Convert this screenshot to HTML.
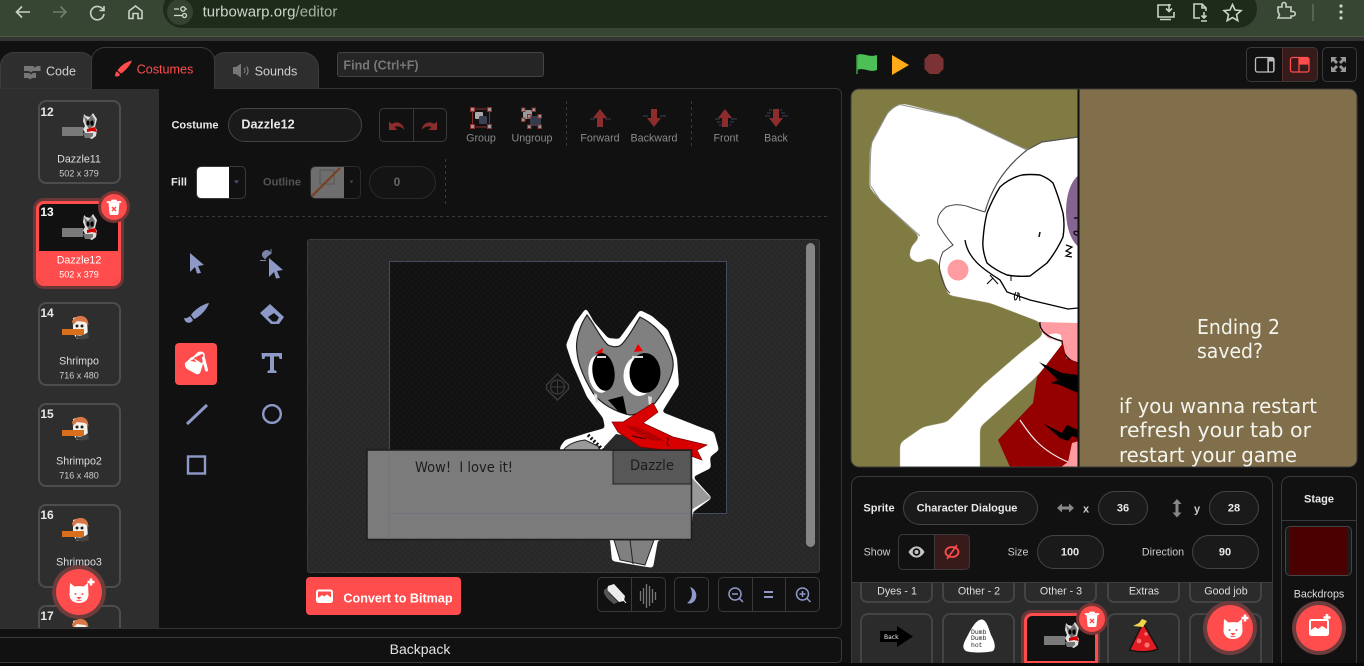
<!DOCTYPE html>
<html><head><meta charset="utf-8"><style>
html,body{margin:0;padding:0;width:1364px;height:666px;overflow:hidden;background:#0e0e0e;font-family:"Liberation Sans",sans-serif}
div{box-sizing:border-box}
.a{position:absolute}
.t{position:absolute;white-space:nowrap;transform:translate(-50%,-50%);line-height:1}
.t[style*="font-size:11px"],.t[style*="font-size:9px"],.lb{margin-top:1px}
.t[style*="font-size:11px"]:not([style*="bold"]){font-size:10.7px!important}
.tile{position:absolute;left:38px;width:83px;border:2px solid #4d4d4d;border-radius:8px}
.lb{color:#8a8a8a;font-size:10.7px}
.in{position:absolute;border:1px solid #444;border-radius:17px;background:#1a1a1a;height:34px}
.grp{position:absolute;border:1px solid #3a3a3a;border-radius:5px}
.sp{position:absolute;top:583px;width:73px;height:20px;border:2px solid #444;border-top:0;border-radius:0 0 7px 7px}
.st{position:absolute;top:613px;width:73px;height:60px;border:2px solid #444;border-radius:8px}
</style></head><body>

<!-- browser chrome -->
<div class="a" style="left:0;top:0;width:1364px;height:36px;background:#374533"></div>
<div class="a" style="left:0;top:36px;width:1364px;height:1px;background:#4c5a47"></div>
<div class="a" style="left:0;top:37px;width:1364px;height:4px;background:#333"></div>
<div class="a" style="left:163px;top:-10px;width:1094px;height:38px;background:#1e2b1b;border-radius:19px"></div>
<div class="a" style="left:167px;top:-1px;width:26px;height:26px;background:#34422f;border-radius:50%"></div>
<div class="t" style="left:270px;top:12px;font-size:15px;letter-spacing:.03px;color:#cdd5c8">turbowarp.org<span style="color:#a9b3a4">/editor</span></div>

<!-- page -->
<div class="a" style="left:0;top:41px;width:1364px;height:625px;background:#111"></div>

<!-- tabs -->
<div class="a" style="left:0;top:52px;width:95px;height:37px;background:#2e2e2e;border:1px solid #3d3d3d;border-bottom:0;border-radius:14px 14px 0 0"></div>
<div class="a" style="left:211px;top:52px;width:108px;height:37px;background:#2e2e2e;border:1px solid #3d3d3d;border-bottom:0;border-radius:14px 16px 0 0"></div>
<div class="a" style="left:91px;top:47px;width:124px;height:42px;background:#111;border:1px solid #3a3a3a;border-bottom:0;border-radius:14px 14px 0 0;z-index:2"></div>
<div class="t" style="left:61px;top:72px;font-size:12.6px;color:#cfcfcf">Code</div>
<div class="t" style="left:165px;top:70px;font-size:12.6px;color:#ff4d4d;z-index:3">Costumes</div>
<div class="t" style="left:276px;top:72px;font-size:12.6px;color:#cfcfcf">Sounds</div>
<div class="a" style="left:337px;top:52px;width:207px;height:25px;background:#252525;border:1px solid #444;border-radius:3px"></div>
<div class="t" style="left:381px;top:66px;font-size:12.6px;font-weight:bold;color:#777">Find (Ctrl+F)</div>

<!-- left panel -->
<div class="a" style="left:0;top:88px;width:842px;height:541px;background:#111;border:1px solid #333;border-radius:0 6px 6px 0;"></div>
<div class="a" style="left:0;top:89px;width:159px;height:539px;background:#2e2e2e;overflow:hidden">
</div>

<div class="tile" style="top:100px;height:84px"></div>
<div class="tile" style="top:302px;height:84px"></div>
<div class="tile" style="top:403px;height:84px"></div>
<div class="tile" style="top:504px;height:84px"></div>
<div class="tile" style="top:605px;height:23px;border-bottom:0;border-radius:8px 8px 0 0"></div>
<div class="a" style="left:33px;top:198px;width:91px;height:91px;border-radius:11px;background:#6b3737"></div>
<div class="a" style="left:36px;top:201px;width:85px;height:85px;border:3px solid #ff4c4c;border-radius:8px;background:#111;overflow:hidden"><div class="a" style="left:0;top:47px;width:85px;height:40px;background:#ff4c4c"></div></div>

<div class="t" style="left:47px;top:112px;font-size:12px;font-weight:bold;color:#e8e8e8">12</div>
<div class="t" style="left:47px;top:212px;font-size:12px;font-weight:bold;color:#fff">13</div>
<div class="t" style="left:47px;top:313px;font-size:12px;font-weight:bold;color:#e8e8e8">14</div>
<div class="t" style="left:47px;top:414px;font-size:12px;font-weight:bold;color:#e8e8e8">15</div>
<div class="t" style="left:47px;top:515px;font-size:12px;font-weight:bold;color:#e8e8e8">16</div>
<div class="t" style="left:47px;top:616px;font-size:12px;font-weight:bold;color:#e8e8e8">17</div>

<div class="t" style="left:79px;top:159px;font-size:11px;color:#ddd">Dazzle11</div>
<div class="t" style="left:79px;top:173px;font-size:9px;color:#ccc">502 x 379</div>
<div class="t" style="left:79px;top:260px;font-size:11px;color:#fff">Dazzle12</div>
<div class="t" style="left:79px;top:274px;font-size:9px;color:#fff">502 x 379</div>
<div class="t" style="left:79px;top:361px;font-size:11px;color:#ddd">Shrimpo</div>
<div class="t" style="left:79px;top:375px;font-size:9px;color:#ccc">716 x 480</div>
<div class="t" style="left:79px;top:461px;font-size:11px;color:#ddd">Shrimpo2</div>
<div class="t" style="left:79px;top:475px;font-size:9px;color:#ccc">716 x 480</div>
<div class="t" style="left:79px;top:562px;font-size:11px;color:#ddd">Shrimpo3</div>

<!-- top toolbar -->
<div class="t" style="left:195px;top:125px;font-size:11px;font-weight:bold;color:#e8e8e8">Costume</div>
<div class="in" style="left:228px;top:108px;width:134px;background:#1a1a1a"></div>
<div class="t" style="left:268px;top:125px;font-size:12.6px;font-weight:bold;color:#e8e8e8">Dazzle12</div>
<div class="grp" style="left:379px;top:108px;width:68px;height:34px"></div>
<div class="a" style="left:413px;top:108px;width:1px;height:34px;background:#3a3a3a"></div>
<div class="t lb" style="left:481px;top:138px">Group</div>
<div class="t lb" style="left:532px;top:138px">Ungroup</div>
<div class="t lb" style="left:600px;top:138px">Forward</div>
<div class="t lb" style="left:654px;top:138px">Backward</div>
<div class="t lb" style="left:726px;top:138px">Front</div>
<div class="t lb" style="left:776px;top:138px">Back</div>

<div class="t" style="left:179px;top:182px;font-size:11px;font-weight:bold;color:#e8e8e8">Fill</div>
<div class="a" style="left:196px;top:166px;width:50px;height:33px;border:1px solid #3a3a3a;border-radius:5px;overflow:hidden"><div style="width:33px;height:33px;background:#fff;margin:-1px 0 0 -1px"></div></div>
<div class="t" style="left:282px;top:182px;font-size:11px;font-weight:bold;color:#555">Outline</div>
<div class="a" style="left:310px;top:166px;width:51px;height:33px;border:1px solid #2c2c2c;border-radius:5px;overflow:hidden"><div style="width:34px;height:33px;background:#6e6e6e;margin:-1px 0 0 -1px"></div></div>
<div class="a" style="left:369px;top:166px;width:67px;height:33px;border:1px solid #2b2b2b;border-radius:17px;background:#141414"></div>
<div class="t" style="left:397px;top:182px;font-size:12px;font-weight:bold;color:#666">0</div>

<!-- canvas -->
<div class="a" style="left:307px;top:239px;width:513px;height:334px;border:1px solid #3c3c3c;border-radius:3px;background:repeating-conic-gradient(#2b2b2b 0 25%,#272727 0 50%) 0 0/6px 6px"></div>
<div class="a" style="left:389px;top:261px;width:338px;height:253px;border:1px solid #434c5e;background:repeating-conic-gradient(#151515 0 25%,#111 0 50%) 0 0/6px 6px"></div>
<div class="a" style="left:806px;top:243px;width:9px;height:304px;border-radius:5px;background:#858585"></div>

<!-- convert -->
<div class="a" style="left:306px;top:577px;width:155px;height:38px;background:#ff4c4c;border-radius:4px"></div>
<div class="t" style="left:398px;top:599px;font-size:12.6px;font-weight:bold;color:#fff">Convert to Bitmap</div>
<div class="grp" style="left:597px;top:577px;width:69px;height:35px"></div>
<div class="a" style="left:631px;top:577px;width:1px;height:35px;background:#3a3a3a"></div>
<div class="grp" style="left:674px;top:577px;width:35px;height:35px"></div>
<div class="grp" style="left:718px;top:577px;width:102px;height:35px"></div>
<div class="a" style="left:752px;top:577px;width:1px;height:35px;background:#3a3a3a"></div>
<div class="a" style="left:785px;top:577px;width:1px;height:35px;background:#3a3a3a"></div>

<!-- backpack -->
<div class="a" style="left:0;top:637px;width:842px;height:26px;background:#111;border:1px solid #3a3a3a;border-left:0;border-radius:0 5px 5px 0"></div>
<div class="t" style="left:420px;top:649px;font-size:14px;color:#e4e4e4">Backpack</div>
<div class="a" style="left:0;top:663px;width:1364px;height:3px;background:#080808"></div>

<!-- stage controls -->
<div class="a" style="left:1282px;top:47px;width:36px;height:35px;background:#371a1a;border-radius:0 5px 5px 0"></div>
<div class="grp" style="left:1246px;top:47px;width:72px;height:35px"></div>
<div class="a" style="left:1282px;top:47px;width:1px;height:35px;background:#553030"></div>
<div class="grp" style="left:1322px;top:47px;width:35px;height:35px"></div>

<!-- sprite panel -->
<div class="a" style="left:851px;top:476px;width:422px;height:187px;background:#111;border:1px solid #3a3a3a;border-bottom:0;border-radius:9px 9px 0 0;overflow:hidden"></div>
<div class="a" style="left:852px;top:583px;width:420px;height:80px;background:#2b2b2b"></div>
<div class="a" style="left:852px;top:582px;width:420px;height:1px;background:#3d3d3d"></div>
<div class="t" style="left:879px;top:508px;font-size:11px;font-weight:bold;color:#e8e8e8">Sprite</div>
<div class="in" style="left:903px;top:491px;width:135px"></div>
<div class="t" style="left:967px;top:508px;font-size:11px;font-weight:bold;color:#e8e8e8">Character Dialogue</div>
<div class="t" style="left:1086px;top:509px;font-size:11px;font-weight:bold;color:#ccc">x</div>
<div class="in" style="left:1098px;top:491px;width:50px"></div>
<div class="t" style="left:1123px;top:508px;font-size:11px;font-weight:bold;color:#e8e8e8">36</div>
<div class="t" style="left:1197px;top:509px;font-size:11px;font-weight:bold;color:#ccc">y</div>
<div class="in" style="left:1209px;top:491px;width:50px"></div>
<div class="t" style="left:1234px;top:508px;font-size:11px;font-weight:bold;color:#e8e8e8">28</div>
<div class="t" style="left:877px;top:552px;font-size:11px;color:#ccc">Show</div>
<div class="a" style="left:934px;top:534px;width:36px;height:36px;background:#371a1a;border-radius:0 5px 5px 0"></div>
<div class="grp" style="left:898px;top:534px;width:72px;height:36px"></div>
<div class="a" style="left:934px;top:534px;width:1px;height:36px;background:#3a3a3a"></div>
<div class="t" style="left:1018px;top:552px;font-size:11px;color:#ccc">Size</div>
<div class="in" style="left:1037px;top:535px;width:67px"></div>
<div class="t" style="left:1070px;top:552px;font-size:11px;font-weight:bold;color:#e8e8e8">100</div>
<div class="t" style="left:1163px;top:552px;font-size:11px;color:#ccc">Direction</div>
<div class="in" style="left:1192px;top:535px;width:67px"></div>
<div class="t" style="left:1225px;top:552px;font-size:11px;font-weight:bold;color:#e8e8e8">90</div>

<div class="a" style="left:852px;top:583px;width:420px;height:80px;overflow:hidden">
<div class="sp" style="left:8px;top:0"></div><div class="sp" style="left:90px;top:0"></div><div class="sp" style="left:172px;top:0"></div><div class="sp" style="left:255px;top:0"></div><div class="sp" style="left:337px;top:0"></div>
<div class="st" style="left:8px;top:30px"></div><div class="st" style="left:90px;top:30px"></div>
<div class="a" style="left:169px;top:27px;width:79px;height:66px;background:#693838;border-radius:10px"></div>
<div class="a" style="left:172px;top:30px;width:74px;height:60px;background:#111;border:3px solid #ff4c4c;border-radius:8px"></div>
<div class="st" style="left:255px;top:30px"></div><div class="st" style="left:337px;top:30px"></div>
<div class="a" style="left:175px;top:78px;width:68px;height:5px;background:#ff4c4c"></div>
</div>
<div class="t" style="left:897px;top:591px;font-size:11px;color:#ddd">Dyes - 1</div>
<div class="t" style="left:979px;top:591px;font-size:11px;color:#ddd">Other - 2</div>
<div class="t" style="left:1061px;top:591px;font-size:11px;color:#ddd">Other - 3</div>
<div class="t" style="left:1144px;top:591px;font-size:11px;color:#ddd">Extras</div>
<div class="t" style="left:1226px;top:591px;font-size:11px;color:#ddd">Good job</div>

<!-- stage panel -->
<div class="a" style="left:1281px;top:476px;width:76px;height:187px;background:#111;border:1px solid #3a3a3a;border-bottom:0;border-radius:9px 9px 0 0"></div>
<div class="a" style="left:1282px;top:520px;width:74px;height:1px;background:#3a3a3a"></div>
<div class="t" style="left:1319px;top:499px;font-size:11px;font-weight:bold;color:#e8e8e8">Stage</div>
<div class="a" style="left:1285px;top:526px;width:67px;height:50px;border:1px solid #444;border-radius:5px;background:#1a1a1a"></div>
<div class="a" style="left:1290px;top:527px;width:57px;height:48px;background:#4a0000"></div>
<div class="t" style="left:1319px;top:594px;font-size:11px;color:#ddd">Backdrops</div>

<!-- all graphics -->
<svg class="a" style="left:0;top:0;z-index:5" width="1364" height="666" viewBox="0 0 1364 666" xmlns="http://www.w3.org/2000/svg">
<defs>
<filter id="rnd" x="-5%" y="-5%" width="110%" height="110%" color-interpolation-filters="sRGB"><feGaussianBlur stdDeviation="3"/><feComponentTransfer><feFuncA type="linear" slope="8" intercept="-3.500"/></feComponentTransfer></filter>
<filter id="rnd2" x="-5%" y="-5%" width="110%" height="110%" color-interpolation-filters="sRGB"><feGaussianBlur stdDeviation="1.600"/><feComponentTransfer><feFuncA type="linear" slope="7" intercept="-3"/></feComponentTransfer></filter>
<clipPath id="stg"><rect x="851" y="89" width="506" height="378" rx="8"/></clipPath>
<clipPath id="stl"><rect x="851" y="89" width="227" height="378"/></clipPath>
<clipPath id="cv"><rect x="308" y="240" width="511" height="332"/></clipPath>
<clipPath id="tb17"><rect x="0" y="600" width="158" height="27"/></clipPath>
<clipPath id="spr"><rect x="852" y="583" width="420" height="80"/></clipPath>
<g id="dz">
<rect x="0" y="14" width="21" height="9" fill="#7a7a7a"/>
<path d="M21 16l4 8 5 2 4-3 1-6-2-3 2-8-4-6-3 4-4-1-2-2-1 7 2 5z" fill="#ddd"/>
<path d="M22 3 L26 7 L30 2 L33 7 L32 13 L27 16 L24 11Z" fill="#6f6f6f"/>
<ellipse cx="26" cy="10" rx="1.500" ry="2.500" fill="#000"/><ellipse cx="30" cy="10" rx="1.700" ry="2.600" fill="#000"/>
<path d="M25 16 L33 14 L35 19 L30 18 L25 19Z" fill="#d40000"/>
<path d="M21 20h10v3l-3 2h-5z" fill="#777"/>
</g>
<g id="sh">
<path d="M11 2 Q18 -1 25 4 L26 20 L15 23 L11 17Z" fill="#f4f0ea"/>
<path d="M10 5 Q14 -1 20 0 Q26 1 26.500 9 L23 6 L15 5 L11 9Z" fill="#d97746"/>
<circle cx="15" cy="10" r="1.500" fill="#222"/><circle cx="20" cy="10" r="1.500" fill="#222"/>
<path d="M14 19 Q20 21 26 16 L27 22 Q20 25 14 22Z" fill="#444"/>
<path d="M17 14h5v4h-5z" fill="#2a8f8f"/>
<rect x="0" y="13" width="22" height="6" fill="#d96f1c"/>
</g>
<g id="cat">
<path d="M-9 -10 L-4.500 -6.500 C-2 -7 2 -7 4.500 -6.500 L9 -10 L9.500 2 C9 7.500 5 10 0 10 C-5 10 -9 7.500 -9.500 2Z" fill="#fff"/>
<circle cx="-3.500" cy="1" r="1" fill="#ff4c4c"/><circle cx="3.500" cy="1" r="1" fill="#ff4c4c"/>
<path d="M-1.500 4.500H1.500L0 6Z M-2.500 7 Q0 8.500 2.500 7" fill="none" stroke="#ff4c4c" stroke-width="1"/>
<path d="M12 -14.500v7M8.500 -11h7" stroke="#fff" stroke-width="2.600"/>
</g>
<g id="trash">
<path d="M-5.500 -4 h11 l-1 10.500 q-.2 1.500 -1.600 1.500 h-5.800 q-1.400 0 -1.600-1.500Z" fill="#fff"/>
<path d="M-6.500 -5 h13 M-2 -6.500 h4" stroke="#fff" stroke-width="1.800" stroke-linecap="round"/>
<path d="M-2 0 l4 4 M2 0 l-4 4" stroke="#ff4c4c" stroke-width="1.500"/>
</g>
</defs>

<!-- chrome icons -->
<g fill="none" stroke="#c9d2c5" stroke-width="1.600">
<path d="M30 12H17M22 6.500L16.500 12L22 17.500"/>
<path d="M53 12H66M60.500 6.500L66 12L60.500 17.500" stroke="#6f7d6a"/>
<path d="M103 9.500A6.700 6.700 0 1 0 104 14M104 6v4.500h-4.500"/>
<path d="M129 18.500v-7.500l6.500-5 6.500 5v7.500h-4v-5h-5v5z"/>
<g stroke="#d2dacd" stroke-width="1.300"><path d="M174 9h5M174 15.500h8"/><circle cx="183" cy="9" r="2.200"/><circle cx="184.500" cy="15.500" r="2"/><path d="M186 9h1"/></g>
<path d="M1171 5h-13v12h16v-5M1160 19.500h11M1169 4v7M1166 8.500l3 3 3-3"/>
<path d="M1200 18h-6V4h8l4 4v3M1202 4v4h4M1204 12v6M1201.500 15.500l2.500 2.500 2.500-2.500M1201 21h6"/>
<path d="M1232.500 4.500l2.500 5.500 6 .6-4.500 4 1.300 6-5.300-3.100-5.300 3.100 1.300-6-4.500-4 6-.6z"/>
<path d="M1278 8h4v-2.500a2 2 0 0 1 4 0V8h5v4.500h2a2.200 2.200 0 0 1 0 4.500h-2v2h-13l1.500-3-1.500-3.500z" transform="translate(0,-1)"/>
</g>
<rect x="1312" y="4" width="2" height="17" fill="#56644f"/>
<g fill="#c9d2c5"><circle cx="1341" cy="6" r="1.600"/><circle cx="1341" cy="12" r="1.600"/><circle cx="1341" cy="18" r="1.600"/></g>

<!-- tab icons -->
<g fill="#777"><path d="M24 66h9l2 1.500 2-1.500h3.500v5H33l-2 1.500-2-1.500H24z"/><path d="M24 73h5l2 1.500 2-1.500h3v5h-4l-2 1.500-2-1.500h-4z"/></g>
<path d="M132 60.500C130 66 124 72 121 73.500L117.500 70.500C120 66 126 62 132 60.500Z" fill="#ff4d4d"/>
<path d="M116 71.500C119 72.500 121 74.500 119 76C118 76.500 115 77 115 75.500Z" fill="#ff4d4d"/>
<path d="M233 67h3l5-3.500v14l-5-3.500h-3z" fill="#777"/><path d="M244 68c1.300 1.500 1.300 3.500 0 5M246.500 66.500c2 2.500 2 6 0 8.500" stroke="#777" stroke-width="1.300" fill="none"/>

<!-- undo redo -->
<g fill="#8d2c2c">
<path d="M389 121.500v8.500h8.500l-3-3c3-1.500 7-.5 10 3 -1-6-7-10-12.500-6z"/>
<path d="M437 121.500v8.500h-8.500l3-3c-3-1.500-7-.5-10 3 1-6 7-10 12.500-6z"/>
</g>

<!-- group / ungroup -->
<g>
<rect x="472.500" y="109" width="17" height="18" fill="none" stroke="#8d2c2c" stroke-width="1"/>
<rect x="475" y="112" width="8" height="7" rx="1" fill="#aaa"/><rect x="479" y="116" width="8" height="8" rx="1.500" fill="#3d4252"/>
<g fill="#999" stroke="#8d2c2c" stroke-width="1"><rect x="470.500" y="107.500" width="4" height="4"/><rect x="487.500" y="107.500" width="4" height="4"/><rect x="470.500" y="124.500" width="4" height="4"/><rect x="487.500" y="124.500" width="4" height="4"/></g>
<rect x="523" y="110" width="9" height="9" rx="2" fill="#9a9a9a"/><rect x="530" y="116" width="11" height="10" rx="2" fill="#363b4b"/>
<g fill="#999" stroke="#8d2c2c" stroke-width="1"><rect x="521.500" y="108" width="3.500" height="3.500"/><rect x="532" y="108" width="3.500" height="3.500"/><rect x="521.500" y="118" width="3.500" height="3.500"/><rect x="527.500" y="114.500" width="3.500" height="3.500"/><rect x="538" y="114.500" width="3.500" height="3.500"/><rect x="527.500" y="125" width="3.500" height="3.500"/><rect x="538" y="125" width="3.500" height="3.500"/></g>
</g>
<!-- arrows -->
<g fill="#8d2c2c">
<path d="M600 109l7 9h-4v9h-6v-9h-4z"/>
<path d="M654 127l7-9h-4v-9h-6v9h-4z"/>
<path d="M725 109l7 9h-4v9h-6v-9h-4z"/>
<path d="M776 127l7-9h-4v-9h-6v9h-4z"/>
</g>
<g stroke="#33384a" stroke-width="1.300">
<path d="M590 119h5M605 119h6M643 116h5M660 116h6"/>
<path d="M715 119h5M731 119h6M717 122h4M730 122h4M719 125h3M729 125h2"/>
<path d="M765 116h5M782 116h6M767 113h4M781 113h4M769 110h3M780 110h2"/>
</g>
<!-- dashed -->
<g stroke="#3a3a3a" stroke-dasharray="3 3" stroke-width="1">
<path d="M566.500 101v48M691.500 101v48M445.500 159v47M170 216.500h658"/>
</g>
<path d="M234 180.500h5l-2.500 3z" fill="#4f5570"/><path d="M349.500 180.500h4l-2 3z" fill="#444"/>
<rect x="320" y="170" width="14" height="14" fill="none" stroke="#555"/>
<path d="M312 196L340 168" stroke="#7a3e1f" stroke-width="2"/>

<!-- tools -->
<g fill="#8d9ac8">
<path d="M190 253l14 12-6 1 3 7-4 .500-2-6.500-5 5z"/>
<path d="M269 258l14 12-6 1 3 7-4 .500-2-6.500-5 5z"/>
<path d="M267 250a4.500 4.500 0 0 1 4 4l-3.500 2.500-2.500 3-3-3.500a5 5 0 0 1 5-6z" fill="#7a84ab"/>
<path d="M260 260.500h6M271 249v5" stroke="#7a84ab" stroke-width="1"/>
<path d="M209 303C207 310 198 318 194 319L191 315C194 310 203 304 209 303Z"/>
<path d="M184 318C187 319 190 316 190 316L193 320C191 324 185 324 184 318Z"/>
<path d="M270 304l14 13-5 7h-8l-11-11z"/>
<path d="M268 317l6-4 5 4.500-2.500 4h-4z" fill="#111"/>
<path d="M261.500 354h20.500v6h-2.500l-.500-2.500h-5v13.500l2.500 1v2h-9v-2l2.500-1v-13.500h-5l-.500 2.500h-2.500z" transform="translate(0,-1)"/>
</g>
<path d="M187 424L207 405" stroke="#8d9ac8" stroke-width="3"/>
<circle cx="272" cy="414" r="8.800" fill="none" stroke="#8d9ac8" stroke-width="2.400"/>
<rect x="188" y="456.500" width="17" height="17" fill="none" stroke="#8d9ac8" stroke-width="2.400"/>
<rect x="175" y="343" width="42" height="42" rx="4" fill="#ff4c4c"/>
<g>
<path d="M185 363L192 357L203 364L200.500 372Q199 375 196 374L187 369Q184.500 367 185 363Z" fill="#fff"/>
<path d="M190 361l4-2 2.500 3z" fill="#ff4c4c"/>
<path d="M190 359L202 353M194 357L198 353Q203 351 204 355L203 364" fill="none" stroke="#fff" stroke-width="1.600"/>
<path d="M203.500 358L206.500 370" stroke="#fff" stroke-width="3" stroke-linecap="round"/>
</g>

<!-- canvas art -->
<g clip-path="url(#cv)">
<g filter="url(#rnd2)"><path d="M586 308L594 322L608 338L619 339L640 310L652 316L668 330L677 358L679 385L662 412L700 427L714 432L719 450L710 457L711 468L693 477L712 498L693 512L690 540L658 540L653 568L612 561L610 540L560 460L560 447L565 440L587 433L605 428L603 418L587 397L572 363L566 345L575 323Z" fill="#fff"/></g>
<path d="M587 315C595 325 600 338 608 345C615 348 620 347 623 343C630 335 635 325 640 317C650 322 660 330 665 340C670 350 674 358 673 367C672 377 665 390 655 403C645 411 635 415 630 415C615 412 600 403 593 393C585 380 578 365 577 352C575 340 580 325 587 315Z" fill="#808080" stroke="#222" stroke-width="1.200"/>
<path d="M595 353L603 348L602 355Z M634 352L638 344L643 351Z" fill="#f00000"/>
<ellipse cx="599.500" cy="374" rx="11" ry="19" transform="rotate(-8 599 374)" fill="#fff"/>
<ellipse cx="603.500" cy="372" rx="11" ry="19" transform="rotate(-8 603 372)" fill="#000"/>
<ellipse cx="639" cy="376" rx="15.500" ry="20" fill="#fff"/>
<ellipse cx="645" cy="373" rx="15.500" ry="20" fill="#000"/>
<path d="M597 357h9M632 357h11" stroke="#ddd" stroke-width="2"/>
<path d="M594 393l2 10 2-.5-1-8z M648 396l1 11 2-1 1-9z" fill="#ddd"/>
<path d="M608 400L623 396L627 415L618 411Z" fill="#000"/>
<path d="M604 447L616 434L630 436L650 440L680 452H604Z" fill="#2a2a2a"/>
<path d="M562 452Q568 442 585 440L600 447L596 455H560Z" fill="#999" stroke="#222"/>
<path d="M588 435L604 451" stroke="#111" stroke-width="3.500" stroke-dasharray="2 2"/>
<path d="M612 422L623 422L653 403L658 412L643 423L673 437L707 445L697 450L702 460L680 452L640 447L618 432Z" fill="#d80000" stroke="#700" stroke-width=".7"/>
<path d="M625 425Q645 428 665 441L650 440Q635 433 625 425Z" fill="#b00000"/>
<path d="M632 436l14 3" stroke="#400" stroke-width="1.200"/>
<path d="M667 437c4 3-3 6 2 9" stroke="#400" stroke-width="1" fill="none"/>
<path d="M691 477L711 498L691 510Z" fill="#999"/>
<path d="M614 540L620 560L645 565L654 540Z" fill="#808080" stroke="#222"/>
<path d="M630 540l3 24" stroke="#222"/>
<path d="M557.500 374l11 11 0 4-11 11-11-11 0-4z" fill="none" stroke="#3a3a3a" stroke-width="1.500" stroke-linejoin="round"/>
<circle cx="557.500" cy="387" r="7" fill="none" stroke="#3a3a3a" stroke-width="1.200"/>
<path d="M550 387h15M557.500 379.500v15" stroke="#3a3a3a"/>
<rect x="367" y="450" width="324.500" height="89.500" fill="#7b7b7b" stroke="#1c1c1c" stroke-width="1.500"/>
<rect x="613" y="450.500" width="78" height="33.500" fill="#575757" stroke="#222" stroke-width="1"/>
<path d="M389 451v88M390 513.500h301" stroke="#5c6a80" stroke-width="1" opacity=".4"/>
<text x="415" y="472" font-family="DejaVu Sans,sans-serif" font-size="14" fill="#1c1c1c" textLength="98" lengthAdjust="spacingAndGlyphs" xml:space="preserve">Wow!  I love it!</text>
<text x="630" y="470" font-family="DejaVu Sans,sans-serif" font-size="14" fill="#1c1c1c" textLength="44" lengthAdjust="spacingAndGlyphs">Dazzle</text>
</g>

<!-- canvas zoom buttons -->
<path d="M608 586l6-2 11 12-1 5-5 1-12-12z" fill="#fff" opacity=".92"/>
<path d="M604 590c-1 4 3 8 5 10l5 4 4-2-9-9-2-5z" fill="#555"/>
<path d="M622 598l4 5" stroke="#fff"/>
<g stroke="#777" stroke-width="1.300"><path d="M640.500 591v10M643.500 588v16M646.500 584v24M649.500 586v20M652.500 589v14M655.500 592v8"/></g>
<path d="M690 587C697 589 699 599 692 603Q690 604 687 603C693 599 693 592 690 587Z" fill="#8d9ac8"/>
<g fill="none" stroke="#8d9ac8" stroke-width="1.500">
<circle cx="735" cy="594" r="6"/><path d="M732 594h6M739.500 598.500l3.500 3.500"/>
<path d="M764 592h9M764 597h9" stroke-width="2"/>
<circle cx="802.500" cy="594" r="6"/><path d="M799.500 594h6M802.500 591v6M807 598.500l3.500 3.500"/>
</g>
<!-- convert icon -->
<rect x="316" y="589.500" width="17" height="13.500" rx="2.500" fill="#fff"/>
<path d="M318 591.500h13v6l-4-3-3 2-2-1.500-4 3z" fill="#ff4c4c"/>

<!-- thumbs -->
<use href="#dz" x="62" y="113"/>
<use href="#dz" x="62" y="214"/>
<use href="#sh" x="62" y="316"/>
<use href="#sh" x="62" y="417"/>
<use href="#sh" x="62" y="518"/>
<g clip-path="url(#tb17)"><use href="#sh" x="62" y="619"/></g>

<!-- trash + add -->
<circle cx="114" cy="207" r="16" fill="#7a3535"/><circle cx="114" cy="207" r="13" fill="#ff4c4c"/>
<use href="#trash" x="114" y="207"/>
<circle cx="79" cy="592" r="27" fill="#6d3c3c"/><circle cx="79" cy="592" r="23" fill="#ff4c4c"/>
<use href="#cat" x="79" y="593"/>

<!-- flag etc -->
<path d="M857 55c6-3 11 3 20 0v15c-8 3-13-3-20 0z" fill="#4cbf56"/><path d="M857 55v19" stroke="#3a9c44" stroke-width="1.500"/>
<path d="M892 55l17 10-17 10z" fill="#ffab19"/>
<path d="M929.500 54h9l5 5v10l-5 5h-9l-5-5V59z" fill="#7b3232"/>
<g fill="none" stroke="#bdbdbd" stroke-width="1.300"><rect x="1255.500" y="57.500" width="18.500" height="14.500" rx="2"/><path d="M1268 58v14"/></g>
<rect x="1268.500" y="61" width="5" height="11" fill="none" stroke="#bdbdbd" stroke-width=".8"/><rect x="1268.500" y="58" width="5" height="3.500" fill="#bdbdbd"/>
<g fill="none" stroke="#ff4c4c" stroke-width="1.300"><rect x="1290.500" y="57.500" width="18.500" height="14.500" rx="2"/><path d="M1299 58v14M1299 64h10"/></g>
<rect x="1299" y="58" width="10" height="6" fill="#ff4c4c"/>
<g fill="#999"><path d="M1331 57h6l-2 2 3 3-2 2-3-3-2 2z"/><path d="M1346 57h-6l2 2-3 3 2 2 3-3 2 2z"/><path d="M1331 72h6l-2-2 3-3-2-2-3 3-2-2z"/><path d="M1346 72h-6l2-2-3-3 2-2 3 3 2-2z"/></g>

<!-- stage art -->
<g clip-path="url(#stg)">
<rect x="851" y="89" width="228" height="378" fill="#7f7b43"/>
<rect x="1079" y="89" width="278" height="378" fill="#806f4a"/>
<g clip-path="url(#stl)">
<g filter="url(#rnd)">
<path d="M898 104L905 104L957 117L1027 150L1042 142L1090 136V330H1063L1065 345L1035 378L980 427L980 490H900V443L923 427L947 422L983 385L1020 353L1043 335L1040 322L990 303L948 295L938 262L930 258L918 263L909 258L911 247L920 237L880 200L869 187L870 150L872 142L887 114Z" fill="#fff"/>
</g>
<path d="M900 104.500Q892 107 887 114L872 142Q870 150 870 185L880 200L920 236" fill="none" stroke="#8f8f8f" stroke-width="1"/>
<path d="M900 104.500L957 117L1027 150" fill="none" stroke="#8f8f8f" stroke-width="1"/>
<path d="M985 212Q995 175 1027 150L1042 142L1078 137" fill="none" stroke="#555" stroke-width="1.200"/>
<path d="M985 212L972 208Q958 202 946 207Q936 215 938 224Q945 236 953 245L943 252Q938 262 940 272Q945 290 950 293" fill="none" stroke="#444" stroke-width="1"/>
<ellipse cx="1085" cy="211" rx="19" ry="38" fill="#85648f"/>
<path d="M1022 175Q1030 174 1040 175Q1048 178 1053 183Q1058 195 1063 213Q1065 225 1063 237Q1056 252 1047 263L1030 276Q1018 277 1007 275Q995 270 987 263Q982 250 983 240Q984 225 987 213Q993 198 1000 187Q1010 178 1022 175Z" fill="#fff" stroke="#000" stroke-width="1.400"/>
<path d="M1040 232l-1 5" stroke="#111" stroke-width="1.500"/>
<path d="M965 240C968 260 985 270 1000 280L1007 292L1030 300L1068 309L1078 308" fill="none" stroke="#000" stroke-width="1.300"/>
<path d="M993 278l-6 6M990 275l8 9M1011 276v5M1016 292c-2 3-2 6-1 8 2 0 3-4 3-8M1019 293l1 8" fill="none" stroke="#000" stroke-width="1"/>
<path d="M1066 245l6 2-6 4 5 2-5 3 6 1M1078 218h-4M1078 232a3 3 0 0 0-4 0 3 3 0 0 0 4 3" fill="none" stroke="#000" stroke-width="1.200"/>
<circle cx="958" cy="270" r="10.500" fill="#ff9ca1"/>
<path d="M1040 322L1040 330L1048 338L1063 343L1066 358L1072 362L1078 363V323Z" fill="#ff9ca1"/>
<path d="M1048 335Q1056 332 1061 335L1062 342L1052 339Z" fill="#fff"/>
<path d="M1040 322C1039 330 1046 337 1062 341C1063 352 1065 360 1078 363" fill="none" stroke="#000" stroke-width="1.300"/>
<path d="M1063 343L1050 360L1037 377L1033 403L998 440L1010 467H1078V363L1066 358Z" fill="#950000"/>
<path d="M1039 362L1062 373L1078 375V393L1060 385L1051 383L1058 380Z M1044 424L1062 433L1067 425L1078 430V438L1072 436L1068 441L1060 438Z" fill="#000"/>
<path d="M1020 420C1030 435 1040 450 1068 462" fill="none" stroke="#eee" stroke-width="1.200"/>
<path d="M1061 467L1068 462L1072 443L1079 441V467Z" fill="#ff9ca1"/>
</g>
<rect x="1077.500" y="89" width="2" height="378" fill="#111"/>
<g font-family="DejaVu Sans,sans-serif" font-size="20" fill="#f4f4ee">
<text x="1197" y="334" textLength="83" lengthAdjust="spacingAndGlyphs">Ending 2</text>
<text x="1197" y="358" textLength="66" lengthAdjust="spacingAndGlyphs">saved?</text>
<text x="1119" y="413" textLength="198" lengthAdjust="spacingAndGlyphs">if you wanna restart</text>
<text x="1119" y="437" textLength="192" lengthAdjust="spacingAndGlyphs">refresh your tab or</text>
<text x="1119" y="462" textLength="178" lengthAdjust="spacingAndGlyphs">restart your game</text>
</g>
</g>
<rect x="851" y="89" width="506" height="378" rx="8" fill="none" stroke="#3c3c3c"/>

<!-- sprite row icons -->
<g fill="#888">
<path d="M1057 508l5-4.500v3h7v-3l5 4.500-5 4.500v-3h-7v3z"/>
<path d="M1177 499l4.500 5h-3v8.500h3l-4.500 5-4.500-5h3v-8.500h-3z"/>
</g>
<path d="M908.500 552C913 544.500 920 544.500 924.500 552C920 559.500 913 559.500 908.500 552Z" fill="#c4c4c4"/><circle cx="916.500" cy="552" r="3.800" fill="#111"/><circle cx="916.500" cy="552" r="2" fill="#c4c4c4"/>
<ellipse cx="952" cy="552" rx="6.500" ry="5" fill="none" stroke="#ff4c4c" stroke-width="1.800"/><path d="M947 559l10-14" stroke="#ff4c4c" stroke-width="1.600"/>

<!-- sprite thumbs -->
<g clip-path="url(#spr)">
<path d="M880 631h17v-5l16 10.500-16 10.500v-5h-17z" fill="#000"/>
<text x="884" y="639" font-family="DejaVu Sans,sans-serif" font-size="6" fill="#eee">Back</text>
<path d="M982 619.500C986 620 988 626 991 635C995 642 996 648 993 651C987 653 970 653 966 651C961 648 964 642 968 635C972 627 977 619 982 619.500Z" fill="#fff"/>
<g font-family="Liberation Mono,monospace" font-size="6.400" fill="#222"><text x="971" y="634">Dumb</text><text x="971" y="640">Dumb</text><text x="971" y="647">hot</text></g>
<use href="#dz" x="1044" y="622"/>
<path d="M1143 623L1158 649Q1146 654 1129.500 650Z" fill="#e31b23" stroke="#111" stroke-width="1.400"/>
<path d="M1133 626l6-3 3-4 5 2-4 6z" fill="#f2d64b"/>
<g fill="#ff7070"><circle cx="1139" cy="641" r="2.300"/><circle cx="1147" cy="645" r="2.600"/><circle cx="1146" cy="634" r="1.700"/></g>
</g>
<circle cx="1092" cy="619" r="16" fill="#7a3535"/><circle cx="1092" cy="619" r="13" fill="#ff4c4c"/>
<use href="#trash" x="1092" y="619"/>
<circle cx="1230" cy="628" r="27" fill="#6d3c3c"/><circle cx="1230" cy="628" r="23" fill="#ff4c4c"/>
<use href="#cat" x="1233" y="629"/>
<circle cx="1319" cy="628" r="27" fill="#6d3c3c"/><circle cx="1319" cy="628" r="23" fill="#ff4c4c"/>
<rect x="1309" y="619" width="20" height="17" rx="2.500" fill="#fff"/>
<path d="M1311 621h16v8l-5-3-4 3-3-2-4 3z" fill="#ff4c4c"/>
<path d="M1327 614v7M1323.500 617.500h7" stroke="#fff" stroke-width="2.600"/>
</svg>

</body></html>
